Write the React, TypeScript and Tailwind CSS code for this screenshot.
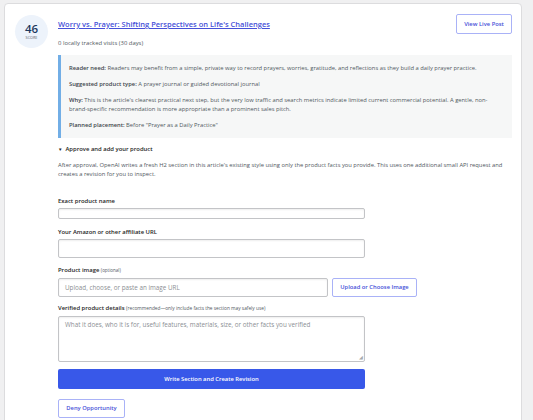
export default function App() {
  const label = "block text-[5.9px] font-semibold text-[#1e1e1e] leading-[8px]";
  const input = "block w-[307px] rounded-[2px] border border-[#c3c4c7] bg-white shadow-[inset_0_1px_2px_rgba(0,0,0,0.07)]";

  return (
    <div className="h-[420px] overflow-hidden bg-[#f0f0f1] pl-[4px] pt-[3px] pr-[11px] font-['Open_Sans',sans-serif] text-[#3c434a]">
      <div className="min-h-[430px] rounded-[4px] border border-[#dcdcde] bg-white pl-[10px] pr-[9px] pt-[10px]">
        <div className="flex gap-[10px]">
          {/* score badge */}
          <div className="mt-[1px] flex h-[33px] w-[33px] shrink-0 flex-col items-center justify-center rounded-full bg-[#edf3fb]">
            <span className="text-[11.5px] font-semibold leading-[12px] text-[#1d3a5f]">46</span>
            <span className="text-[3.8px] leading-[5px] text-[#646970]">SCORE</span>
          </div>

          <div className="flex-1">
            <div className="flex items-start justify-between">
              <a href="#" className="mt-[5px] text-[7.5px] font-semibold leading-[10px] text-[#4650d8] underline">
                Worry vs. Prayer: Shifting Perspectives on Life's Challenges
              </a>
              <button className="h-[20px] w-[56px] rounded-[2px] border border-[#a9b2f7] bg-white text-[5.8px] font-semibold text-[#4650d8]">
                View Live Post
              </button>
            </div>
            <p className="mt-[5px] text-[5.9px] leading-[8px] text-[#50575e]">0 locally tracked visits (30 days)</p>

            {/* recommendation */}
            <div className="mt-[8px] border-l-[3px] border-[#72aee6] bg-[#f6f7f7] px-[8px] pt-[9px] pb-[9px] text-[5.8px] leading-[8.5px] text-[#50575e]">
              <p><b className="font-semibold text-[#3c434a]">Reader need:</b> Readers may benefit from a simple, private way to record prayers, worries, gratitude, and reflections as they build a daily prayer practice.</p>
              <p className="mt-[7.5px]"><b className="font-semibold text-[#3c434a]">Suggested product type:</b> A prayer journal or guided devotional journal</p>
              <p className="mt-[7.5px]"><b className="font-semibold text-[#3c434a]">Why:</b> This is the article's clearest practical next step, but the very low traffic and search metrics indicate limited current commercial potential. A gentle, non-brand-specific recommendation is more appropriate than a prominent sales pitch.</p>
              <p className="mt-[7.5px]"><b className="font-semibold text-[#3c434a]">Planned placement:</b> Before "Prayer as a Daily Practice"</p>
            </div>

            <p className="mt-[7px] text-[5.9px] font-semibold leading-[8px] text-[#1e1e1e]">
              <span className="mr-[3px] text-[4.5px]">▼</span>Approve and add your product
            </p>
            <p className="mt-[8px] text-[5.8px] leading-[9px] text-[#50575e]">
              After approval, OpenAI writes a fresh H2 section in this article's existing style using only the product facts you provide. This uses one additional small API request and creates a revision for you to inspect.
            </p>

            <label className={label + " mt-[18px]"}>Exact product name</label>
            <div className={input + " mt-[3px] h-[11px]"} />

            <label className={label + " mt-[9px]"}>Your Amazon or other affiliate URL</label>
            <div className={input + " mt-[3px] h-[19px]"} />

            <label className={label + " mt-[8px]"}>
              Product image <span className="text-[4.5px] font-normal text-[#50575e]">(optional)</span>
            </label>
            <div className="mt-[4px] flex gap-[4px]">
              <div className="flex h-[19px] w-[270px] items-center rounded-[2px] border border-[#c3c4c7] pl-[6px] text-[6.3px] text-[#8c8f94] shadow-[inset_0_1px_2px_rgba(0,0,0,0.07)]">
                Upload, choose, or paste an image URL
              </div>
              <button className="h-[19px] w-[85px] rounded-[2px] border border-[#a9b2f7] bg-white text-[5.8px] font-semibold text-[#4650d8]">
                Upload or Choose Image
              </button>
            </div>

            <label className={label + " mt-[7px]"}>
              Verified product details <span className="text-[4.8px] font-normal text-[#50575e]">(recommended—only include facts the section may safely use)</span>
            </label>
            <div className={input + " relative mt-[4px] h-[46px] pl-[6px] pt-[3px] text-[6.3px] leading-[10px] text-[#8c8f94]"}>
              What it does, who it is for, useful features, materials, size, or other facts you verified
              <span className="absolute bottom-[1px] right-[1px] text-[5px] leading-[5px] text-[#a7aaad]">◢</span>
            </div>

            <button className="mt-[7px] block h-[20px] w-[307px] rounded-[2px] bg-[#3858e9] text-[5.8px] font-semibold text-white">
              Write Section and Create Revision
            </button>
            <button className="mt-[10px] block h-[19px] w-[67px] rounded-[2px] border border-[#a9b2f7] bg-white text-[5.8px] font-semibold text-[#4650d8]">
              Deny Opportunity
            </button>
          </div>
        </div>
      </div>
    </div>
  );
}
